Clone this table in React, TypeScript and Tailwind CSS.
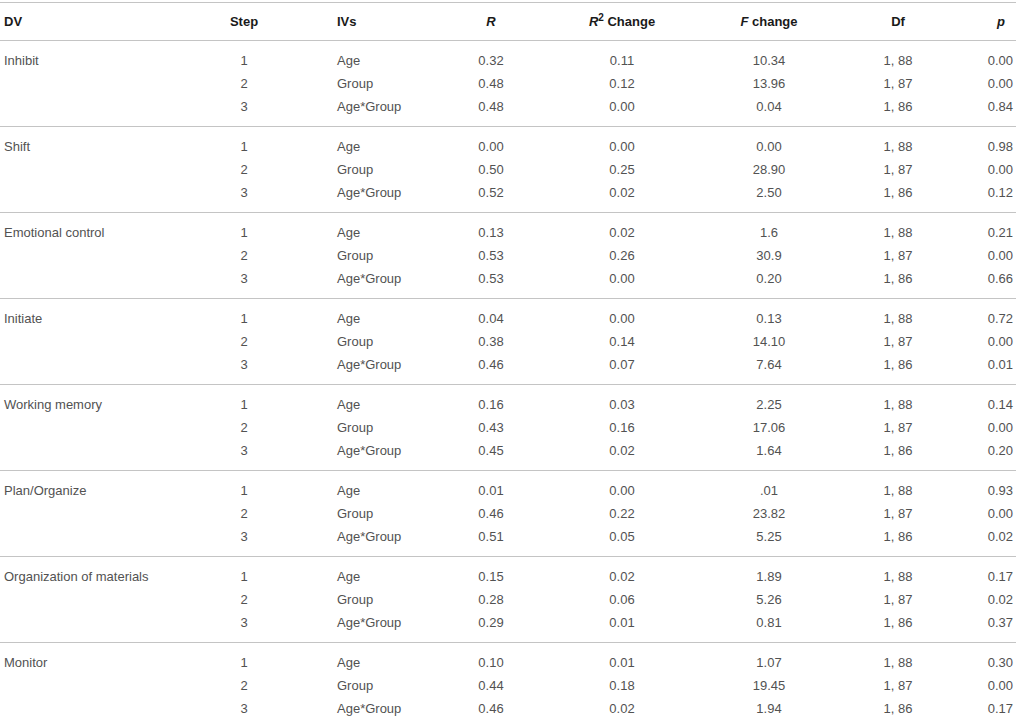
import React from "react";

type Row = [string, string, string, string, string, string, string];
type Block = { dv: string; rows: Row[] };

const blocks: Block[] = [
  { dv: "Inhibit", rows: [
    ["1", "Age", "0.32", "0.11", "10.34", "1, 88", "0.00"],
    ["2", "Group", "0.48", "0.12", "13.96", "1, 87", "0.00"],
    ["3", "Age*Group", "0.48", "0.00", "0.04", "1, 86", "0.84"],
  ]},
  { dv: "Shift", rows: [
    ["1", "Age", "0.00", "0.00", "0.00", "1, 88", "0.98"],
    ["2", "Group", "0.50", "0.25", "28.90", "1, 87", "0.00"],
    ["3", "Age*Group", "0.52", "0.02", "2.50", "1, 86", "0.12"],
  ]},
  { dv: "Emotional control", rows: [
    ["1", "Age", "0.13", "0.02", "1.6", "1, 88", "0.21"],
    ["2", "Group", "0.53", "0.26", "30.9", "1, 87", "0.00"],
    ["3", "Age*Group", "0.53", "0.00", "0.20", "1, 86", "0.66"],
  ]},
  { dv: "Initiate", rows: [
    ["1", "Age", "0.04", "0.00", "0.13", "1, 88", "0.72"],
    ["2", "Group", "0.38", "0.14", "14.10", "1, 87", "0.00"],
    ["3", "Age*Group", "0.46", "0.07", "7.64", "1, 86", "0.01"],
  ]},
  { dv: "Working memory", rows: [
    ["1", "Age", "0.16", "0.03", "2.25", "1, 88", "0.14"],
    ["2", "Group", "0.43", "0.16", "17.06", "1, 87", "0.00"],
    ["3", "Age*Group", "0.45", "0.02", "1.64", "1, 86", "0.20"],
  ]},
  { dv: "Plan/Organize", rows: [
    ["1", "Age", "0.01", "0.00", ".01", "1, 88", "0.93"],
    ["2", "Group", "0.46", "0.22", "23.82", "1, 87", "0.00"],
    ["3", "Age*Group", "0.51", "0.05", "5.25", "1, 86", "0.02"],
  ]},
  { dv: "Organization of materials", rows: [
    ["1", "Age", "0.15", "0.02", "1.89", "1, 88", "0.17"],
    ["2", "Group", "0.28", "0.06", "5.26", "1, 87", "0.02"],
    ["3", "Age*Group", "0.29", "0.01", "0.81", "1, 86", "0.37"],
  ]},
  { dv: "Monitor", rows: [
    ["1", "Age", "0.10", "0.01", "1.07", "1, 88", "0.30"],
    ["2", "Group", "0.44", "0.18", "19.45", "1, 87", "0.00"],
    ["3", "Age*Group", "0.46", "0.02", "1.94", "1, 86", "0.17"],
  ]},
];

const GRID =
  "grid grid-cols-[204px_80px_162px_90px_172px_122px_136px_50px] items-center";

export default function App() {
  return (
    <div
      className="w-[1016px] h-[720px] overflow-hidden bg-white text-[13px] leading-none"
      style={{ fontFamily: '"Liberation Sans", Arial, sans-serif' }}
    >
      <div className={`${GRID} mt-[2px] h-[39px] border-t border-b border-[#c4c4c4] font-bold text-[#1a1a1a]`}>
        <div className="pl-[4px]">DV</div>
        <div className="text-center">Step</div>
        <div className="pl-[53px]">IVs</div>
        <div className="text-center italic">R</div>
        <div className="text-center">
          <span className="italic">R</span>
          <sup className="text-[10px]">2</sup> Change
        </div>
        <div className="text-center">
          <span className="italic">F</span> change
        </div>
        <div className="text-center">Df</div>
        <div className="text-right pr-[11px] italic">p</div>
      </div>
      {blocks.map((b, bi) => (
        <div
          key={b.dv}
          className={`pt-[8px] pb-[8px] text-[#525252] ${bi < blocks.length - 1 ? "border-b border-[#c4c4c4]" : ""}`}
        >
          {b.rows.map((r, ri) => (
            <div key={ri} className={`${GRID} h-[23px]`}>
              <div className="pl-[4px] whitespace-nowrap">{ri === 0 ? b.dv : ""}</div>
              <div className="text-center">{r[0]}</div>
              <div className="pl-[53px]">{r[1]}</div>
              <div className="text-center">{r[2]}</div>
              <div className="text-center">{r[3]}</div>
              <div className="text-center">{r[4]}</div>
              <div className="text-center">{r[5]}</div>
              <div className="text-right pr-[3px]">{r[6]}</div>
            </div>
          ))}
        </div>
      ))}
    </div>
  );
}
